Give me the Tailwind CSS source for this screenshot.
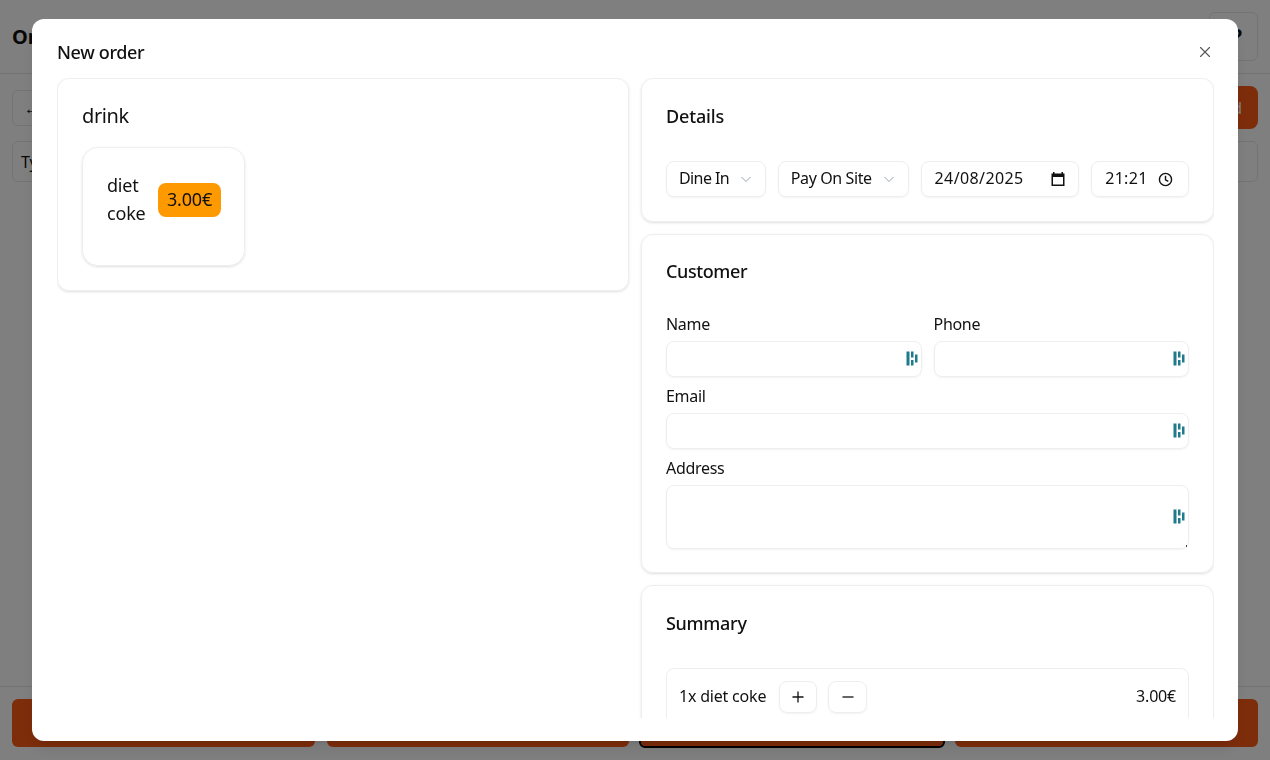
<!doctype html>
<html lang="en">
  <head>
    <meta charset="UTF-8" />
    <meta name="viewport" content="width=device-width, initial-scale=1.0" />
    <title>New order</title>
    <script src="https://cdn.jsdelivr.net/npm/@tailwindcss/browser@4"></script>
  </head>
  <body class="font-['Noto_Sans',sans-serif] text-[#111] bg-white overflow-hidden">
    <!-- page behind the dialog -->
    <div class="h-[760px] flex flex-col">
      <header class="h-[74px] shrink-0 border-b border-gray-200 flex items-center justify-between px-3">
        <h1 class="text-xl font-bold">Orders</h1>
        <button class="w-[49px] h-[49px] border border-gray-200 rounded-md text-2xl font-semibold pl-[6px] text-[#111]">?</button>
      </header>
      <main class="flex-1 px-3 pt-3">
        <div class="flex justify-between items-center h-[43px]">
          <button class="w-[40px] h-[36px] border border-gray-200 rounded-md">←</button>
          <button class="w-[120px] h-[43px] bg-[#fc5a16] rounded-lg text-white text-right pr-4">Add</button>
        </div>
        <div class="mt-3 h-[41px] border border-gray-200 rounded-md px-2 flex items-center">Type</div>
      </main>
      <footer class="h-[74px] shrink-0 border-t border-gray-200 px-3 pt-3 flex">
        <button class="w-[303px] h-[48px] bg-[#fc5a16] rounded-md"></button>
        <button class="ml-3 w-[302px] h-[48px] bg-[#fc5a16] rounded-md"></button>
        <button class="ml-[10px] w-[306px] h-[49px] bg-[#fc5a16] rounded-md border-2 border-black"></button>
        <button class="ml-[10px] w-[303px] h-[48px] bg-[#fc5a16] rounded-md"></button>
      </footer>
    </div>

    <!-- dialog -->
    <div class="fixed inset-0 bg-black/50 flex items-center justify-center">
      <div class="w-[1206px] h-[722px] bg-white rounded-xl shadow-lg flex flex-col pl-[25px] pr-[24px] pb-[23px]">
        <div class="h-[59px] shrink-0 flex items-center justify-between pt-[7px]">
          <h2 class="text-lg font-medium tracking-[-0.35px]">New order</h2>
          <svg class="w-4 h-4 text-[#555] mr-[1px]" viewBox="0 0 16 16" fill="none" stroke="currentColor" stroke-width="1.100" stroke-linecap="round">
            <path d="M3.500 3.500l9 9M12.500 3.500l-9 9" />
          </svg>
        </div>

        <div class="flex-1 min-h-0 overflow-hidden grid grid-cols-[572px_573px] gap-x-3 items-start">
          <!-- menu -->
          <section class="border border-[#eeeeee] rounded-xl shadow-sm p-6 h-[213px]">
            <h3 class="h-7 text-xl leading-[26px] tracking-[-0.4px]">drink</h3>
            <div class="mt-[16px] w-[163px] h-[119px] border border-[#eeeeee] rounded-2xl shadow-sm pl-6 pr-2 pt-[23px] flex gap-3">
              <div class="w-[39px] leading-7 text-lg tracking-[-0.2px]">diet coke</div>
              <span class="self-start mt-[12px] h-[34px] px-[9px] pb-[2px] flex items-center bg-[#ff9900] rounded-lg text-lg tracking-[-0.2px] shrink-0">3.00€</span>
            </div>
          </section>

          <!-- order form -->
          <div class="flex flex-col gap-3">
            <section class="border border-[#eeeeee] rounded-xl shadow-sm p-6 h-[144px]">
              <h3 class="h-7 text-lg font-medium leading-[26px] tracking-[-0.15px]">Details</h3>
              <div class="mt-[30px] flex gap-3">
                <div class="w-[100px] h-9 border border-[#eeeeee] rounded-lg shadow-xs flex items-center justify-between pl-3 pr-3 pb-[2px]">
                  <span class="tracking-[-0.6px]">Dine In</span>
                  <svg class="w-3.5 h-3.5 text-gray-400 mt-[2px]" viewBox="0 0 14 14" fill="none" stroke="currentColor" stroke-width="1"><path d="M2.500 5l4.500 4.500L11.500 5" /></svg>
                </div>
                <div class="w-[131px] h-9 border border-[#eeeeee] rounded-lg shadow-xs flex items-center justify-between pl-3 pr-3 pb-[2px]">
                  <span class="tracking-[-0.4px]">Pay On Site</span>
                  <svg class="w-3.5 h-3.5 text-gray-400 mt-[2px]" viewBox="0 0 14 14" fill="none" stroke="currentColor" stroke-width="1"><path d="M2.500 5l4.500 4.500L11.500 5" /></svg>
                </div>
                <div class="w-[159px] h-9 border border-[#eeeeee] rounded-lg shadow-xs flex items-center justify-between pl-[13px] pr-[12px] pb-[2px]">
                  <span class="tracking-[0.4px]">24/08/2025</span>
                  <svg class="w-4 h-4 mt-[2px]" viewBox="0 0 16 16" fill="currentColor"><path d="M3 1h1.500v1.500h7V1H13v1.500h1.500V15h-13V2.500H3zM3 6v7.500h10V6z" /></svg>
                </div>
                <div class="w-[98px] h-9 border border-[#eeeeee] rounded-lg shadow-xs flex items-center justify-between pl-[13px] pr-[15px] pb-[2px]">
                  <span class="tracking-[0.3px]">21:21</span>
                  <svg class="w-[15px] h-[15px] mt-[2px]" viewBox="0 0 16 16" fill="none" stroke="currentColor" stroke-width="1.500"><circle cx="8" cy="8" r="6.500" /><path d="M8 4v4.300l3 1.700" /></svg>
                </div>
              </div>
            </section>

            <section class="border border-[#eeeeee] rounded-xl shadow-sm p-6 h-[339px]">
              <h3 class="h-7 text-lg font-medium leading-[25px] tracking-[-0.4px]">Customer</h3>
              <div class="mt-[25px] grid grid-cols-2 gap-x-3 gap-y-[7px] tracking-[-0.3px]">
                <label class="block">
                  <span class="block leading-6 mb-[5px]">Name</span>
                  <span class="relative block">
                    <input class="block w-full h-9 border border-[#eeeeee] rounded-lg shadow-xs px-3" type="text" />
                    <svg class="absolute right-[4px] top-[10px] w-3 h-[15px] text-[#1f7a8c]" viewBox="0 0 12 15" fill="currentColor"><path d="M0.500 0.500h3v14h-3zM5 0.500h2.500v6H5zM5 9h2.500v5.500H5zM9 3.500h2.500v8H9z" /></svg>
                  </span>
                </label>
                <label class="block">
                  <span class="block leading-6 mb-[5px]">Phone</span>
                  <span class="relative block">
                    <input class="block w-full h-9 border border-[#eeeeee] rounded-lg shadow-xs px-3" type="text" />
                    <svg class="absolute right-[4px] top-[10px] w-3 h-[15px] text-[#1f7a8c]" viewBox="0 0 12 15" fill="currentColor"><path d="M0.500 0.500h3v14h-3zM5 0.500h2.500v6H5zM5 9h2.500v5.500H5zM9 3.500h2.500v8H9z" /></svg>
                  </span>
                </label>
                <label class="block col-span-2">
                  <span class="block leading-6 mb-[5px]">Email</span>
                  <span class="relative block">
                    <input class="block w-full h-9 border border-[#eeeeee] rounded-lg shadow-xs px-3" type="text" />
                    <svg class="absolute right-[4px] top-[10px] w-3 h-[15px] text-[#1f7a8c]" viewBox="0 0 12 15" fill="currentColor"><path d="M0.500 0.500h3v14h-3zM5 0.500h2.500v6H5zM5 9h2.500v5.500H5zM9 3.500h2.500v8H9z" /></svg>
                  </span>
                </label>
                <label class="block col-span-2">
                  <span class="block leading-6 mb-[5px]">Address</span>
                  <span class="relative block">
                    <textarea class="block w-full h-16 border border-[#eeeeee] rounded-lg shadow-xs px-3 resize-none"></textarea>
                    <svg class="absolute right-[4px] top-[24px] w-3 h-[15px] text-[#1f7a8c]" viewBox="0 0 12 15" fill="currentColor"><path d="M0.500 0.500h3v14h-3zM5 0.500h2.500v6H5zM5 9h2.500v5.500H5zM9 3.500h2.500v8H9z" /></svg>
                    <span class="absolute right-[2px] bottom-[2px] w-px h-[2px] bg-[#444]"></span>
                  </span>
                </label>
              </div>
            </section>

            <section class="border border-[#eeeeee] rounded-xl shadow-sm p-6">
              <h3 class="h-7 text-lg font-medium leading-[26px] tracking-[-0.3px]">Summary</h3>
              <div class="mt-[30px] border border-[#eeeeee] rounded-lg p-3 flex items-center">
                <span class="tracking-[-0.2px] pb-[2px]">1x diet coke</span>
                <button class="ml-[13px] w-[38px] h-8 border border-[#eeeeee] rounded-lg shadow-xs flex items-center justify-center">
                  <svg class="w-3.5 h-3.5" viewBox="0 0 14 14" fill="none" stroke="currentColor" stroke-width="1.300"><path d="M7 1.500v11M1.500 7h11" /></svg>
                </button>
                <button class="ml-[11px] w-[39px] h-8 border border-[#eeeeee] rounded-lg shadow-xs flex items-center justify-center">
                  <svg class="w-3.5 h-3.5" viewBox="0 0 14 14" fill="none" stroke="currentColor" stroke-width="1.300"><path d="M1.500 7h11" /></svg>
                </button>
                <span class="ml-auto tracking-[-0.2px] pb-[2px]">3.00€</span>
              </div>
            </section>
          </div>
        </div>
      </div>
    </div>
  </body>
</html>
